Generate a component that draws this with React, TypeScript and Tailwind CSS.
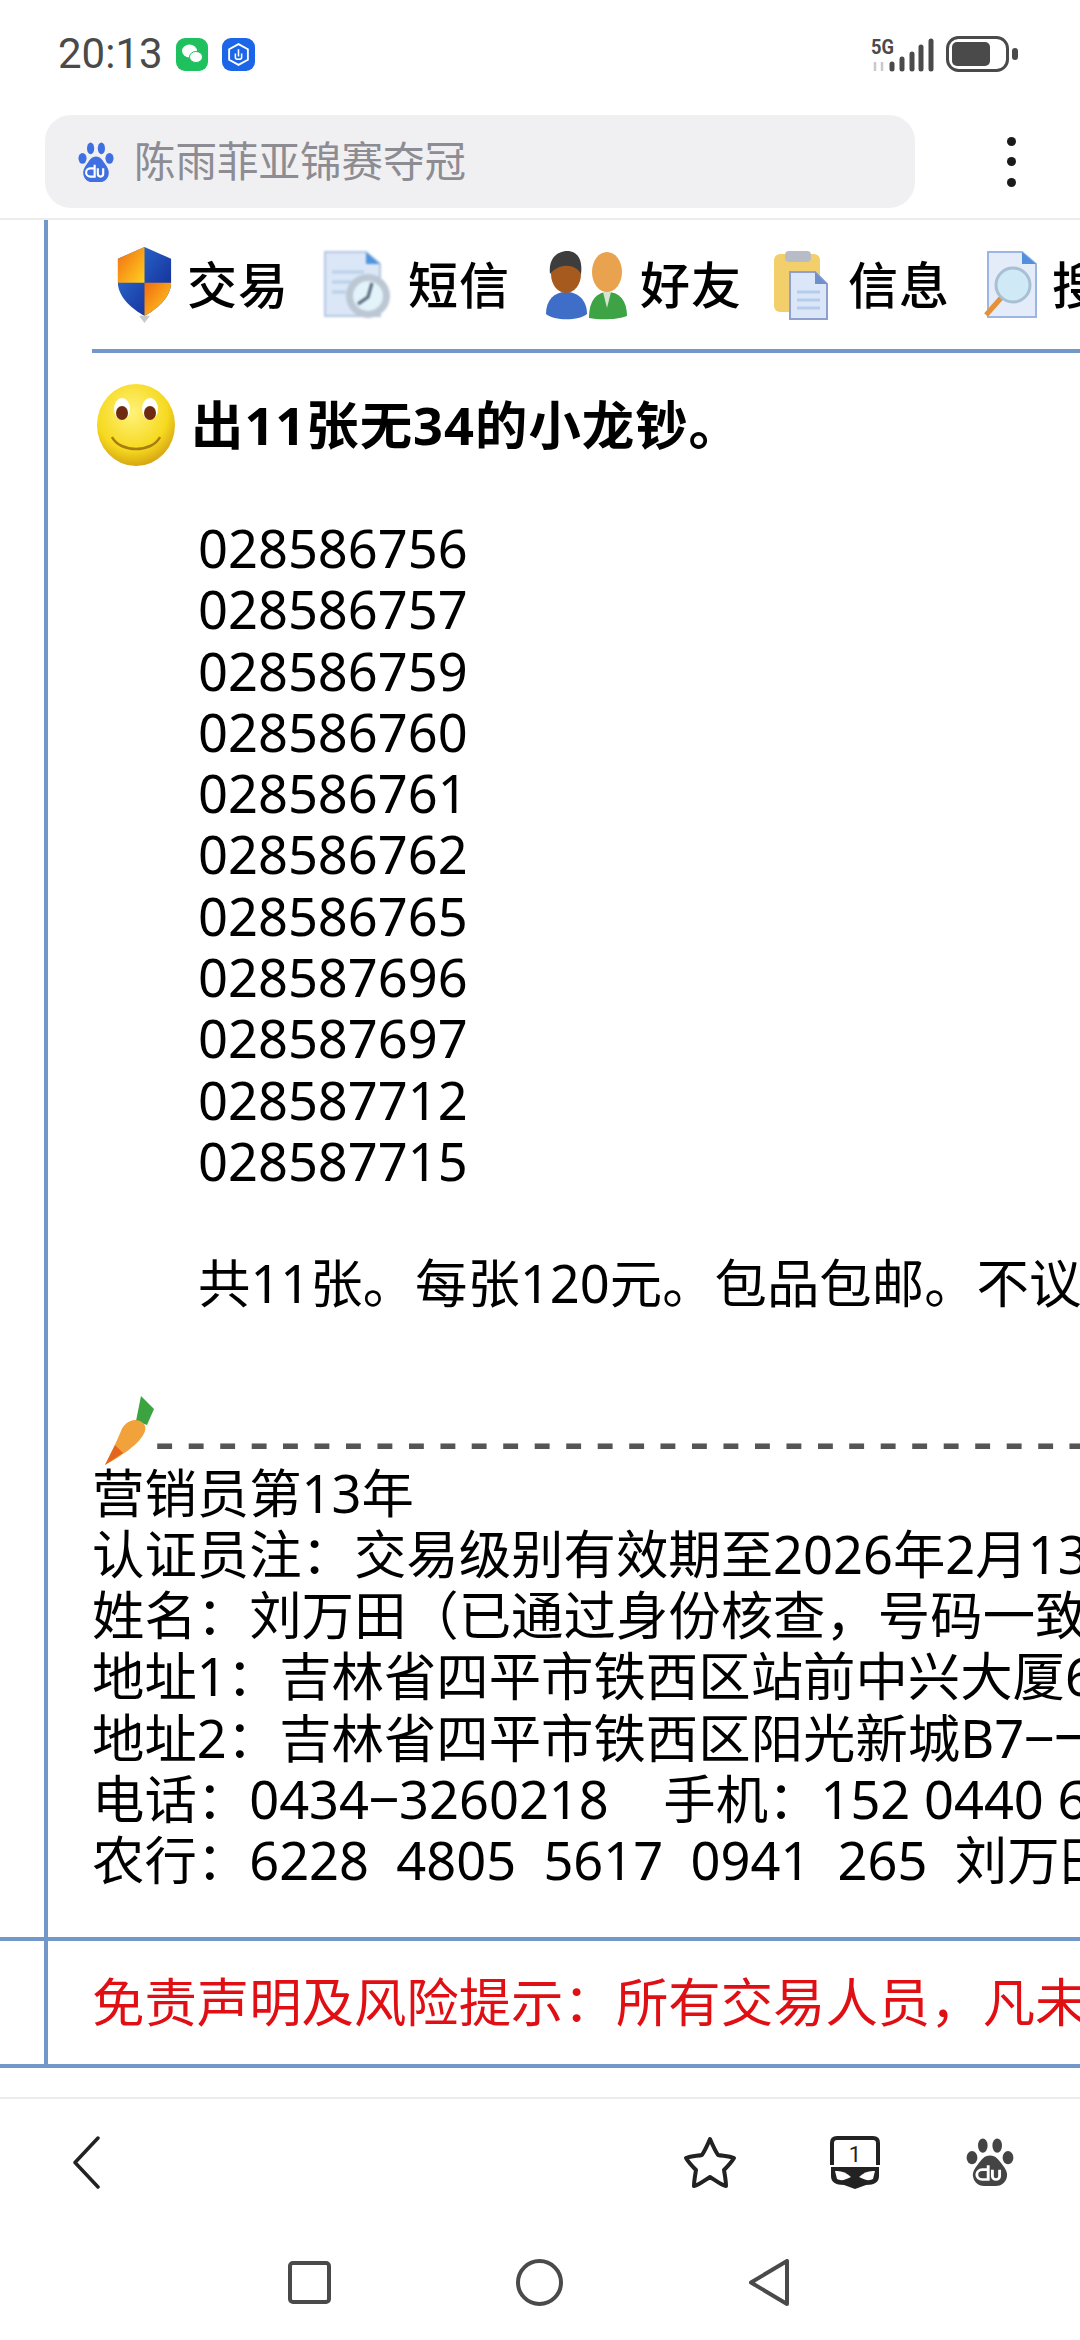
const numbers = [
  "028586756",
  "028586757",
  "028586759",
  "028586760",
  "028586761",
  "028586762",
  "028586765",
  "028587696",
  "028587697",
  "028587712",
  "028587715",
];

// full-width punctuation written as escapes: colon ff1a, comma ff0c, brackets ff08 / ff09
const contactLines = [
  "营销员第13年",
  "认证员注\uff1a交易级别有效期至2026年2月13日",
  "姓名\uff1a刘万田\uff08已通过身份核查\uff0c号码一致\uff09",
  "地址1\uff1a吉林省四平市铁西区站前中兴大厦6",
  "地址2\uff1a吉林省四平市铁西区阳光新城B7\u2012一",
  "电话\uff1a0434\u20123260218\u00a0\u00a0\u00a0\u00a0手机\uff1a152 0440 6",
  "农行\uff1a6228\u00a0\u00a04805\u00a0\u00a05617\u00a0\u00a00941\u00a0\u00a0265\u00a0\u00a0刘万田",
];

function PawIcon({ className, color }: { className: string; color: string }) {
  return (
    <svg viewBox="0 0 40 44" className={className} fill={color} preserveAspectRatio="none">
      <ellipse cx="14" cy="7" rx="4" ry="6.5" />
      <ellipse cx="26" cy="7" rx="4" ry="6.5" />
      <ellipse cx="5" cy="18" rx="4.5" ry="6" />
      <ellipse cx="35" cy="18" rx="4.5" ry="6" />
      <path d="M20 16c5 0 7 4 10 8 3 4 5 8 4 12-1 5-5 8-9 8H15c-4 0-8-3-9-8-1-4 1-8 4-12 3-4 5-8 10-8z" />
      <path d="M18.5 25v13h-5a4 4 0 0 1 0-9h5M22 29v6a3 3 0 0 0 6 0v-6" fill="none" stroke="#fff" strokeWidth="2.4" />
    </svg>
  );
}

function ShieldIcon() {
  return (
    <svg viewBox="0 0 60 84" className="w-[55px] h-[77px] shrink-0 blur-[0.6px]">
      <defs>
        <linearGradient id="shieldWarm" x1="0" y1="0" x2="1" y2="1">
          <stop offset="0" stopColor="#f26a12" />
          <stop offset="1" stopColor="#ffd21f" />
        </linearGradient>
        <linearGradient id="shieldCool" x1="0" y1="0" x2="1" y2="1">
          <stop offset="0" stopColor="#2f78d8" />
          <stop offset="1" stopColor="#0f1f8c" />
        </linearGradient>
      </defs>
      <path d="M30 1 L59 14 V40 C59 56 42 70 30 76 C18 70 1 56 1 40 V14 Z" fill="url(#shieldCool)" />
      <path d="M30 1 L1 14 V40 H30 Z" fill="url(#shieldWarm)" />
      <path d="M30 40 H59 C59 56 42 70 30 76 Z" fill="url(#shieldWarm)" />
      <path d="M24 76 L30 84 L36 76 Z" fill="#c9c9c9" />
    </svg>
  );
}

function ClockDocIcon() {
  return (
    <svg viewBox="0 0 71 70" className="w-[71px] h-[70px] shrink-0 blur-[0.8px]">
      <path d="M3 2 H44 L58 14 V66 H3 Z" fill="#dbe7f7" stroke="#b5c6e2" strokeWidth="2" />
      <path d="M44 2 V14 H58 Z" fill="#4f94dc" />
      <path d="M10 22 H42 M10 32 H30 M10 42 H24" stroke="#b8d0ea" strokeWidth="3" />
      <circle cx="46" cy="46" r="22" fill="#bcc7d4" />
      <circle cx="46" cy="46" r="15" fill="#e3f3fa" />
      <path d="M50 33 L46 47 L36 54" stroke="#56687a" strokeWidth="3" fill="none" />
    </svg>
  );
}

function FriendsIcon() {
  return (
    <svg viewBox="0 0 83 70" className="w-[83px] h-[70px] shrink-0 blur-[0.6px]">
      <path d="M44 68 C44 50 52 42 63 42 C74 42 82 50 82 66 C72 70 54 70 44 68 Z" fill="#3ea344" />
      <ellipse cx="62" cy="22" rx="15" ry="20" fill="#e9a24e" />
      <path d="M58 42 H66 L62 58 Z" fill="#d8e4d4" />
      <path d="M1 64 C1 50 9 42 21 42 C33 42 42 50 42 64 C34 71 9 71 1 64 Z" fill="#3e6ec8" />
      <ellipse cx="21" cy="24" rx="15" ry="19" fill="#a75a1e" />
      <path d="M5 24 C3 7 14 1 22 1 C32 1 38 9 36 24 C31 14 15 12 5 24 Z" fill="#3d3d3d" />
    </svg>
  );
}

function ClipboardIcon() {
  return (
    <svg viewBox="0 0 55 70" className="w-[55px] h-[70px] shrink-0 blur-[0.6px]">
      <rect x="1" y="4" width="46" height="58" rx="6" fill="#f3cf6b" />
      <rect x="12" y="1" width="26" height="11" rx="4" fill="#b7bcc6" />
      <path d="M17 22 H42 L54 34 V69 H17 Z" fill="#dbe6f8" stroke="#8f9fce" strokeWidth="2" />
      <path d="M42 22 V34 H54 Z" fill="#6f8fcb" />
      <path d="M24 42 H47 M24 50 H47 M24 58 H47" stroke="#b6cdea" strokeWidth="3" />
    </svg>
  );
}

function SearchDocIcon() {
  return (
    <svg viewBox="0 0 55 70" className="w-[55px] h-[70px] shrink-0 blur-[0.6px]">
      <path d="M5 2 H39 L53 14 V67 H5 Z" fill="#e4ecfa" stroke="#9db5e2" strokeWidth="2" />
      <path d="M39 2 V14 H53 Z" fill="#4f8fdb" />
      <path d="M3 65 L18 48" stroke="#e4913c" strokeWidth="5" />
      <circle cx="30" cy="35" r="17" fill="#cfeaf6" stroke="#a9bfd4" strokeWidth="3" />
    </svg>
  );
}

function Smiley() {
  return (
    <svg viewBox="0 0 80 84" className="w-[80px] h-[84px] shrink-0 blur-[0.5px]">
      <defs>
        <radialGradient id="face" cx="45%" cy="35%" r="70%">
          <stop offset="0" stopColor="#fff27a" />
          <stop offset=".65" stopColor="#f6d91f" />
          <stop offset="1" stopColor="#cf9a10" />
        </radialGradient>
      </defs>
      <ellipse cx="40" cy="42" rx="39" ry="41" fill="url(#face)" />
      <ellipse cx="26" cy="26" rx="8" ry="11" fill="#fff" />
      <ellipse cx="54" cy="26" rx="8" ry="11" fill="#fff" />
      <ellipse cx="26" cy="30" rx="6" ry="7" fill="#6e2a10" />
      <ellipse cx="54" cy="30" rx="6" ry="7" fill="#6e2a10" />
      <path d="M16 54 C24 70 56 70 64 54" stroke="#a77d12" strokeWidth="2.5" fill="none" />
    </svg>
  );
}

function Carrot() {
  return (
    <svg viewBox="0 0 52 70" className="w-[52px] h-[70px] shrink-0 blur-[0.4px]">
      <path d="M38 1 L51 14 L44 30 L33 26 Z" fill="#3ba33f" />
      <path d="M32 25 C38 25 44 29 42 36 C38 48 20 60 2 70 C8 58 14 46 18 36 C20 30 26 25 32 25 Z" fill="#f2a23a" />
      <path d="M12 50 L2 70 L20 58 Z" fill="#e4651f" />
    </svg>
  );
}

export default function App() {
  return (
    <div className="w-[1080px] h-[2340px] overflow-hidden bg-white flex flex-col whitespace-nowrap font-['Noto_Sans','Noto_Sans_CJK_SC',sans-serif] text-black">
      {/* Status bar */}
      <div className="h-[115px] shrink-0 flex items-center pl-[58px] pb-[7px]">
        <span className="w-[118px] text-[42px] leading-none text-[#4a4a4a] font-['Roboto',sans-serif]">20:13</span>
        <div className="w-[32px] h-[33px] rounded-[9px] bg-[#1fc15f] flex items-center justify-center">
          <svg viewBox="0 0 24 24" className="w-[24px] h-[24px]" fill="#fff">
            <ellipse cx="9.5" cy="9" rx="7.5" ry="6.5" />
            <ellipse cx="16" cy="15" rx="6.5" ry="5.5" stroke="#1fc15f" strokeWidth="1" />
          </svg>
        </div>
        <div className="w-[33px] h-[33px] ml-[14px] rounded-[9px] bg-[#1b66e8] flex items-center justify-center">
          <svg viewBox="0 0 24 24" className="w-[25px] h-[25px]" fill="none" stroke="#fff" strokeWidth="1.8">
            <path d="M12 2 L21 7 V17 L12 22 L3 17 V7 Z" />
            <path d="M12 7 V14 M9 11 V15 C9 17 15 17 15 15 V11" strokeWidth="1.5" />
          </svg>
        </div>
        <svg viewBox="0 0 64 36" className="w-[64px] h-[36px] ml-[616px] mt-[3px]">
          <text x="0" y="16" fontSize="21" fontWeight="700" fill="#4a4a4a" fontFamily="Roboto" textLength="23" lengthAdjust="spacingAndGlyphs">5G</text>
          <path d="M4 24 V33 M11 24 V33" stroke="#c9c9c9" strokeWidth="2.5" />
          <g stroke="#4a4a4a" strokeWidth="5" strokeLinecap="round">
            <path d="M21 26 V31" />
            <path d="M31 21 V31" />
            <path d="M41 16 V31" />
            <path d="M50 9 V31" />
            <path d="M60 3 V31" />
          </g>
        </svg>
        <svg viewBox="0 0 72 36" className="w-[72px] h-[36px] ml-[11px]">
          <rect x="1.5" y="1.5" width="60" height="33" rx="11" fill="none" stroke="#4a4a4a" strokeWidth="3" />
          <rect x="6" y="6" width="38" height="24" rx="5" fill="#4a4a4a" />
          <rect x="66" y="12" width="6" height="12" rx="3" fill="#4a4a4a" />
        </svg>
      </div>

      {/* Address bar */}
      <div className="h-[105px] shrink-0 flex items-start pl-[45px] border-b-2 border-[#ececec]">
        <div className="w-[870px] h-[93px] rounded-[26px] bg-[#f0f0f2] flex items-center pl-[33px]">
          <PawIcon className="w-[36px] h-[40px]" color="#3f6fe0" />
          <span className="ml-[20px] text-[41.5px] leading-none text-[#8c8c92]">陈雨菲亚锦赛夺冠</span>
        </div>
        <div className="ml-[92px] h-[93px] flex flex-col justify-center gap-[11.5px]">
          <div className="w-[9px] h-[9px] rounded-full bg-[#1a1a1a]" />
          <div className="w-[9px] h-[9px] rounded-full bg-[#1a1a1a]" />
          <div className="w-[9px] h-[9px] rounded-full bg-[#1a1a1a]" />
        </div>
      </div>

      {/* Forum post */}
      <div className="shrink-0 border-b-[4px] border-[#7297c9]">
        <div className="border-b-[4px] border-[#7297c9]">
          <div className="ml-[44px] border-l-[4px] border-[#7297c9] pl-[44px] h-[1717px] text-[52.4px]">
            <div className="h-[133px] border-b-[4px] border-[#7297c9] flex items-center pl-[25px] text-[50px] leading-none font-medium tracking-[1px]">
              <ShieldIcon />
              <span className="ml-[15px] w-[102px] shrink-0">交易</span>
              <div className="ml-[33px]"><ClockDocIcon /></div>
              <span className="ml-[15px] w-[102px] shrink-0">短信</span>
              <div className="ml-[35px]"><FriendsIcon /></div>
              <span className="ml-[12px] w-[102px] shrink-0">好友</span>
              <div className="ml-[31px]"><ClipboardIcon /></div>
              <span className="ml-[20px] w-[102px] shrink-0">信息</span>
              <div className="ml-[33px]"><SearchDocIcon /></div>
              <span className="ml-[14px] w-[102px] shrink-0">搜索</span>
            </div>
            <div className="flex items-center mt-[30px] ml-[4px]">
              <Smiley />
              <span className="ml-[15px] leading-none font-bold tracking-[1px]">出11张无34的小龙钞。</span>
            </div>
            <div className="pl-[106px] mt-[50px] leading-[61.3px]">
              {numbers.map((n) => (
                <div key={n}>{n}</div>
              ))}
              <div className="mt-[61px]">共11张。每张120元。包品包邮。不议价</div>
            </div>
            <div className="flex items-end mt-[81px] ml-[11px]">
              <Carrot />
              <span className="text-[60px] leading-[40px] mb-[6px] font-medium text-[#555] tracking-[12.2px]">
                {"-".repeat(32)}
              </span>
            </div>
            <div className="-mt-[3px] leading-[61.3px]">
              {contactLines.map((line) => (
                <div key={line}>{line}</div>
              ))}
            </div>
          </div>
        </div>
        <div className="ml-[44px] border-l-[4px] border-[#7297c9] pl-[44px] h-[123px] flex items-center">
          <span className="text-[52.4px] leading-none text-[#e00f14]">{"免责声明及风险提示\uff1a所有交易人员\uff0c凡未"}</span>
        </div>
      </div>

      {/* Browser toolbar */}
      <div className="mt-[29px] h-[128px] shrink-0 border-t-2 border-[#ececec] flex items-center pl-[72px]">
        <svg viewBox="0 0 28 53" className="w-[28px] h-[53px]" fill="none" stroke="#222" strokeWidth="3.5" strokeLinecap="round" strokeLinejoin="round">
          <path d="M26 2 L3 26.5 L26 51" />
        </svg>
        <svg viewBox="0 0 54 53" className="w-[54px] h-[53px] ml-[583px]" fill="none" stroke="#222" strokeWidth="4" strokeLinejoin="round">
          <path d="M27 3 C30 10 33 16 35 19 C40 20 46 20 51 22 C48 27 44 31 41 34 C42 40 43 45 43 50 C38 49 32 44 27 41 C22 44 16 49 11 50 C11 45 12 40 13 34 C10 31 6 27 3 22 C8 20 14 20 19 19 C21 16 24 10 27 3 Z" />
        </svg>
        <svg viewBox="0 0 50 53" className="w-[50px] h-[53px] ml-[93px]">
          <path d="M2 29 V7 Q2 2 7 2 H43 Q48 2 48 7 V29" fill="none" stroke="#222" strokeWidth="4" />
          <text x="25" y="26" fontSize="22" textAnchor="middle" fill="#222" fontFamily="Roboto">1</text>
          <path d="M1 31 H49 V40 Q49 49 36 49 L25 53 L14 49 Q1 49 1 40 Z" fill="#222" />
          <path d="M5 35 Q14 34 21 41 Q12 46 7 43 Z" fill="#fff" />
          <path d="M45 35 Q36 34 29 41 Q38 46 43 43 Z" fill="#fff" />
        </svg>
        <PawIcon className="w-[48px] h-[48px] ml-[86px]" color="#444" />
      </div>

      {/* Navigation bar */}
      <div className="flex-1 flex items-center pl-[288px]">
        <svg viewBox="0 0 43 43" className="w-[43px] h-[43px]" fill="none" stroke="#4a4a4a" strokeWidth="4">
          <rect x="2" y="2" width="39" height="39" rx="3" />
        </svg>
        <svg viewBox="0 0 47 47" className="w-[47px] h-[47px] ml-[185px]" fill="none" stroke="#4a4a4a" strokeWidth="4">
          <circle cx="23.5" cy="23.5" r="21.5" />
        </svg>
        <svg viewBox="0 0 40 47" className="w-[40px] h-[47px] ml-[186px]" fill="none" stroke="#4a4a4a" strokeWidth="4" strokeLinejoin="round">
          <path d="M38 2 V45 L2 23.5 Z" />
        </svg>
      </div>
    </div>
  );
}
